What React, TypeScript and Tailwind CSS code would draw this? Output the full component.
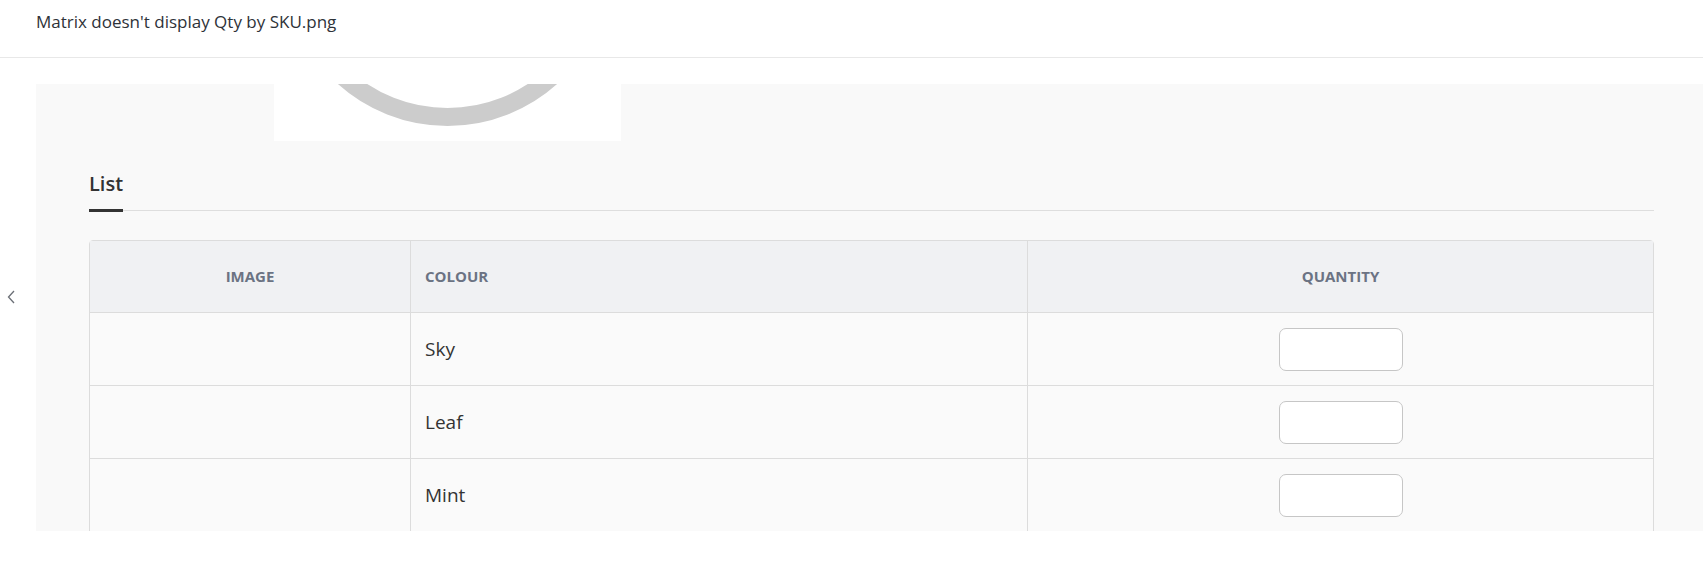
import React from "react"

const rows = ["Sky", "Leaf", "Mint"]

function Spinner() {
    return (
        <svg width="347" height="57" viewBox="0 0 347 57" className="block">
            <circle cx="173.5" cy="-122" r="155" fill="none" stroke="#cccccc" strokeWidth="18" />
        </svg>
    )
}

export default function App() {
    return (
        <div className="min-h-[581px] bg-white font-['Open_Sans',sans-serif] text-[#333]">
            <div className="flex h-[58px] items-start border-b border-[#e8e8e8] px-[36px] pt-[10px]">
                <span className="text-[17px] leading-[23px] text-[#2e3238]">Matrix doesn't display Qty by SKU.png</span>
            </div>
            <div className="flex">
                <div className="w-[36px] shrink-0 pl-[7px] pt-[232px]">
                    <svg width="8" height="14" viewBox="0 0 8 14">
                        <path d="M7 1 L1.5 7 L7 13" fill="none" stroke="#6b6f76" strokeWidth="1.3" />
                    </svg>
                </div>
                <div className="mt-[26px] h-[447px] flex-1 overflow-hidden bg-[#f9f9f9] pl-[53px] pr-[49px]">
                    <div className="-ml-[53px] pl-[238px]">
                        <div className="h-[57px] w-[347px] overflow-hidden bg-white">
                            <Spinner />
                        </div>
                    </div>
                    <div className="mt-[29px] flex border-b border-[#dedede]">
                        <div className="-mb-[2px] border-b-[3px] border-[#333] pb-[11px] text-[20px] font-semibold leading-[28px] text-[#333]">
                            List
                        </div>
                    </div>
                    <div className="mt-[29px] rounded-t-[4px] border border-[#dcdcdc]">
                        <div className="grid h-[72px] grid-cols-[320px_617px_1fr] border-b border-[#dcdcdc] bg-[#f0f1f3] text-[15px] font-bold uppercase text-[#6b7383]">
                            <div className="flex items-center justify-center">Image</div>
                            <div className="flex items-center border-l border-[#dcdcdc] px-[14px]">Colour</div>
                            <div className="flex items-center justify-center border-l border-[#dcdcdc]">Quantity</div>
                        </div>
                        {rows.map((name) => (
                            <div key={name} className="grid h-[73px] grid-cols-[320px_617px_1fr] border-b border-[#dcdcdc] bg-[#fafafa]">
                                <div />
                                <div className="flex items-center border-l border-[#dcdcdc] px-[14px] text-[19px] text-[#333]">{name}</div>
                                <div className="flex items-center justify-center border-l border-[#dcdcdc]">
                                    <input type="text" className="h-[43px] w-[124px] rounded-[7px] border border-[#c6c6c6] bg-white outline-none" />
                                </div>
                            </div>
                        ))}
                    </div>
                </div>
            </div>
        </div>
    )
}
